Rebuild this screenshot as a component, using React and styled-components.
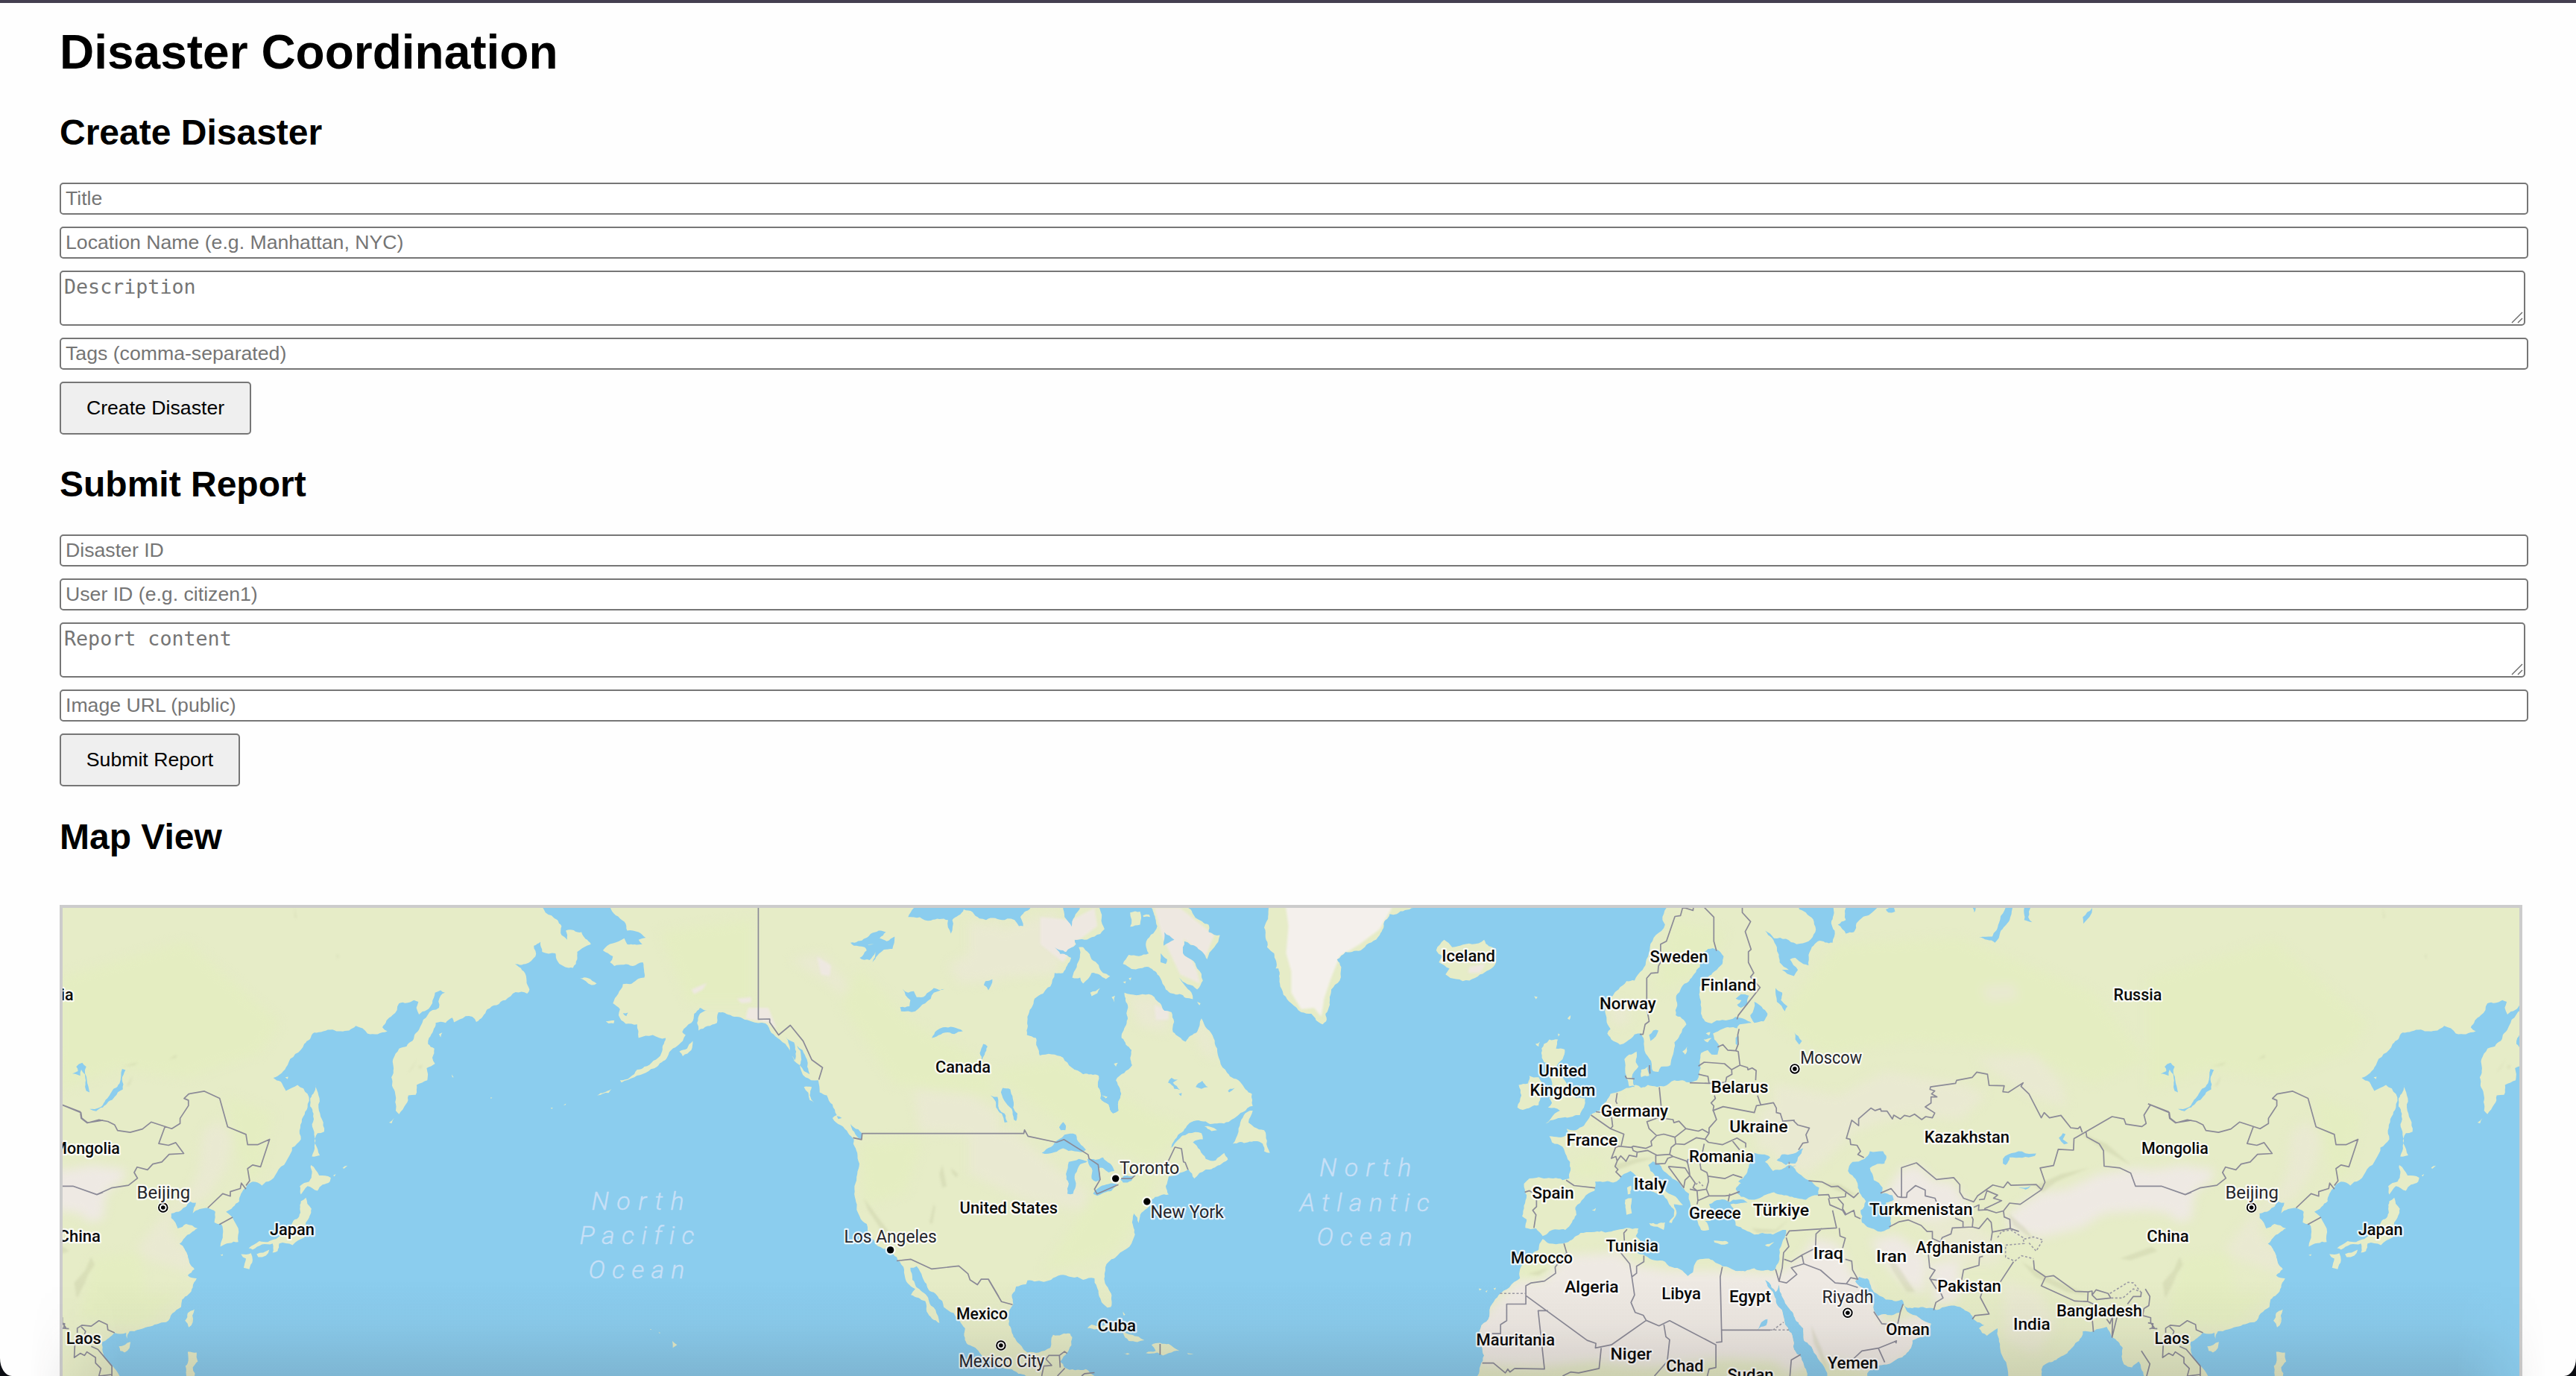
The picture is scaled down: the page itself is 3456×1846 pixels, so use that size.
import React from "react";
import styled, { createGlobalStyle } from "styled-components";

const GlobalStyle = createGlobalStyle`
  html, body { margin: 0; padding: 0; background: #0b0d12; }
  *, *::before, *::after { box-sizing: border-box; }
`;

const Page = styled.main`
  position: relative;
  height: 1846px;
  overflow: hidden;
  padding: 29px 76px 0 80px;
  border-top: 4px solid #443f50;
  border-radius: 0 0 16px 16px / 0 0 24px 24px;
  background: #fefefe;
  color: #000;
  font-family: "Liberation Sans", Arial, Helvetica, sans-serif;
`;

const Title = styled.h1`
  margin: 0 0 43px;
  font-size: 64px;
  line-height: 74px;
  font-weight: 700;
`;

const Section = styled.section`
  margin-bottom: ${(p) => p.$gap || 39}px;
`;

const Heading = styled.h2`
  margin: 0 0 40px;
  font-size: 48px;
  line-height: 55px;
  font-weight: 700;
`;

const Form = styled.form`
  display: flex;
  flex-direction: column;
  align-items: flex-start;
  gap: 16px;
  width: 3296px;
`;

const Input = styled.input`
  width: 3312px;
  height: 43px;
  margin: 0;
  padding: 2px 6px 3px;
  border: 2px solid #767676;
  border-radius: 5px;
  background: #fff;
  font-family: "Liberation Sans", Arial, sans-serif;
  font-size: 26.667px;
  line-height: 30px;
  outline: none;
  &::placeholder { color: #757575; opacity: 1; }
`;

const AreaWrap = styled.div`
  position: relative;
  width: 3308px;
  height: 74px;
`;

const Area = styled.textarea`
  display: block;
  width: 100%;
  height: 100%;
  margin: 0;
  padding: 4px;
  border: 2px solid #767676;
  border-radius: 5px;
  background: #fff;
  font-family: "DejaVu Sans Mono", Menlo, monospace;
  font-size: 26.667px;
  line-height: 31px;
  resize: none;
  overflow: hidden;
  outline: none;
  &::placeholder { color: #757575; opacity: 1; }
`;

const Grip = styled.svg`
  position: absolute;
  right: 3px;
  bottom: 3px;
  width: 16px;
  height: 16px;
`;

const Button = styled.button`
  width: ${(p) => p.$width}px;
  height: 71px;
  margin: 0;
  padding: 0;
  border: 2px solid #767676;
  border-radius: 5px;
  background: #efefef;
  color: #000;
  font-family: "Liberation Sans", Arial, sans-serif;
  font-size: 26.667px;
`;

const MapFrame = styled.div`
  width: 3304px;
  height: 1000px;
  margin-top: 64px;
  border: 4px solid #ccc;
  background: #8bcdee;
  overflow: hidden;
`;

const MapSvg = styled.svg`
  display: block;
  width: 3296px;
  height: 632px;
`;

const Shade = styled.div`
  position: absolute;
  left: 40px;
  right: 40px;
  bottom: 0;
  height: 130px;
  pointer-events: none;
  background: linear-gradient(to bottom, rgba(40, 30, 30, 0), rgba(40, 30, 30, 0.03) 45%, rgba(40, 30, 30, 0.13));
  mask-image: linear-gradient(to right, transparent, #000 120px, #000 calc(100% - 120px), transparent);
`;

/* ---- map geometry: every sheet is 1568 units square with its own origin and x scale ---- */
const WORLD = 2801.8;
const SY = 636 / 1568;
const SHEETS = {
  A: [80 + WORLD, 700 / 1568],
  B: [740, 600 / 1568],
  W: [740 + WORLD, 600 / 1568],
  C: [1300, 600 / 1568],
  D: [1850, 560 / 1568],
  E: [2380, 560 / 1568],
};

function parse(text) {
  let sheet = SHEETS.A;
  const out = [];
  text.trim().split(/\s+/).forEach((t) => {
    if (SHEETS[t]) sheet = SHEETS[t];
    else {
      const [x, y] = t.split(",").map(Number);
      out.push([sheet[0] + x * sheet[1], 1210 + y * SY]);
    }
  });
  return out;
}

function noise(a, b) {
  const v = Math.sin(a * 12.9898 + b * 78.233) * 43758.5453;
  return v - Math.floor(v) - 0.5;
}

function split(a, b, out) {
  const dx = b[0] - a[0];
  const dy = b[1] - a[1];
  const len = Math.hypot(dx, dy);
  const outside = (a[1] < 1216 && b[1] < 1216) || (a[1] > 1848 && b[1] > 1848);
  if (len < 5 || outside) {
    out.push(b);
    return;
  }
  const n = noise(a[0] + b[0], a[1] + b[1]) * 0.24;
  const m = [(a[0] + b[0]) / 2 - dy * n, (a[1] + b[1]) / 2 + dx * n];
  split(a, m, out);
  split(m, b, out);
}

const toPath = (pts, close) =>
  "M" + pts.map((p) => p[0].toFixed(1) + " " + p[1].toFixed(1)).join("L") + (close ? "Z" : "");

function coast(list) {
  return list
    .map((t) => {
      const pts = parse(t);
      const out = [];
      pts.forEach((p, i) => split(p, pts[(i + 1) % pts.length], out));
      return toPath(out, true);
    })
    .join("");
}
const lines = (list) => list.map((t) => toPath(parse(t), false)).join("");
const shapes = (list) => list.map((t) => toPath(parse(t), true)).join("");

const LAND = coast([
  `D 1090,-20 1080,20 1065,60 1075,75 1040,110 1018,150 1005,190 990,225 960,260 930,262 900,290 855,330 855,390 870,420 858,435 880,460 905,472 930,462 960,438 985,435 995,470 1010,510 1025,545 1030,560 1050,562 1060,545 1095,540 1105,505 1110,465 1130,440 1155,405 1145,390 1115,375 1117,310 1135,285 1165,262 1205,215 1215,175 1235,155 1270,158 1295,180 1290,205 1260,230 1235,250 1205,280 1210,330 1210,370 1225,395 1250,402 1290,390 1340,380 1375,388 1400,400 1355,405 1345,418 1290,420 1255,435 1260,455 1278,475 1272,505 1250,505 1235,490 1210,500 1205,530 1203,570 1195,590 1170,597 1140,590 1110,590 1070,610 1045,612 1010,605 985,615 965,605 940,610 932,585 925,560 922,520 940,505 968,495 965,530 975,545 960,560 950,580 955,600 960,612 930,615 910,625 870,635 855,660 830,690 795,705 770,740 740,755 705,750 710,770 640,775 650,795 690,810 705,840 718,860 715,915 690,920 620,915 565,915 545,932 555,970 538,1040 555,1050 550,1078 590,1080 615,1105 640,1090 700,1085 725,1060 742,1035 738,1010 770,980 810,955 812,925 850,925 880,928 920,900 945,890 965,905 990,935 1020,955 1070,970 1090,1000 1110,1020 1108,1040 1090,1060 1100,1062 1118,1030 1108,1000 1130,1003 1142,1003 1115,975 1070,945 1045,915 1020,890 1012,870 1030,858 1050,865 1065,885 1090,905 1140,945 1165,965 1170,1000 1180,1020 1195,1050 1210,1085 1240,1085 1225,1055 1260,1050 1250,1020 1240,1000 1260,990 1300,985 1325,995 1320,1000 1335,1030 1340,1070 1375,1085 1410,1100 1440,1095 1480,1100 1530,1085 1545,1085 E 45,1085 42,1105 30,1130 20,1170 5,1215 D 1480,1220 1410,1212 1375,1222 1320,1212 1290,1205 1240,1180 1195,1185 1180,1225 1160,1238 1130,1215 1090,1205 1075,1190 1000,1170 970,1160 990,1130 965,1105 975,1080 930,1078 880,1088 820,1090 740,1105 690,1130 640,1130 615,1115 600,1150 555,1180 530,1215 530,1245 490,1275 450,1300 425,1330 415,1370 385,1400 378,1440 385,1470 395,1500 370,1568 370,1620 E 150,1620 125,1568 115,1540 75,1480 70,1440 40,1390 30,1350 0,1300 D 1480,1290 1450,1250 1465,1258 1490,1290 1502,1265 E 22,1288 40,1320 75,1370 110,1410 112,1450 150,1490 165,1510 195,1550 200,1620 340,1620 350,1560 415,1530 465,1510 515,1475 520,1450 560,1440 590,1395 545,1375 500,1355 485,1330 475,1358 450,1365 390,1370 375,1350 365,1315 330,1275 305,1255 320,1240 350,1245 375,1290 420,1315 480,1315 495,1340 560,1340 610,1350 700,1340 745,1370 790,1400 770,1410 800,1435 840,1410 850,1480 880,1568 890,1620 1000,1620 1005,1560 1010,1535 1060,1515 1155,1440 1160,1420 1200,1420 1250,1405 1270,1440 1310,1475 1315,1530 1345,1540 1370,1520 1390,1568 1400,1620 A 180,1620 180,1568 155,1530 130,1490 128,1455 165,1425 200,1425 203,1445 210,1420 265,1405 320,1390 365,1340 368,1315 400,1275 412,1245 385,1235 405,1215 385,1170 360,1130 395,1095 415,1080 380,1065 355,1080 335,1045 335,1030 365,1020 390,990 410,995 400,1030 445,1012 468,1025 465,1060 485,1065 490,1100 483,1140 537,1125 537,1080 520,1045 500,1025 540,990 545,965 580,925 608,938 635,920 685,850 725,785 732,710 745,680 745,635 715,605 680,625 665,595 642,582 685,540 735,470 765,432 820,422 870,425 890,410 925,435 985,428 970,415 1000,375 1020,335 1065,325 1078,330 1072,350 1080,372 1120,335 1128,300 1145,292 1158,300 1145,310 1140,350 1085,410 1060,460 1020,485 1002,520 997,580 1010,690 1020,702 1040,670 1048,640 1070,638 1073,605 1105,590 1103,550 1128,535 1120,515 1126,485 1107,470 1110,450 1130,400 1160,400 1180,383 1185,398 1220,378 1240,380 1252,397 1285,355 1340,325 1370,298 1405,303 1412,290 1395,230 1375,210 1355,200 1400,205 1430,180 1425,145 1445,132 1450,165 1490,170 W 20,195 60,218 75,218 90,190 90,165 138,140 105,100 50,95 55,125 35,110 35,80 0,45 A 1460,35 1450,15 1450,-20`,
  `D 640,455 672,455 665,485 698,488 690,520 665,550 690,580 705,600 720,630 740,650 775,650 770,680 755,705 700,712 665,718 625,733 660,700 680,690 635,680 650,665 640,650 670,640 650,610 640,570 640,540 620,530 610,500 620,470`,
  `D 600,580 565,575 560,600 525,605 535,640 520,680 540,688 600,672 610,640 615,600`,
  `D 215,160 245,125 275,150 305,145 350,140 395,125 440,160 440,200 380,240 340,260 290,255 250,240 265,220 225,200 240,180`,
  `D 985,555 1010,545 1015,575 985,580`, `D 1140,495 1158,478 1150,505`, `D 1220,455 1250,450 1235,465`,
  `D 1228,435 1245,430 1240,442`, `D 925,985 950,980 950,1030 930,1035`, `D 932,945 947,938 945,965 935,968`,
  `D 1015,1062 1075,1060 1070,1085 1020,1070`, `D 1258,1120 1312,1126 1312,1130 1260,1126`,
  `D 1450,1135 1485,1125 1465,1140`, `D 800,1020 815,1012 812,1022`, `D 583,312 596,314 590,322`,
  `D 708,385 720,375 716,390`, `D 588,470 605,462 600,478`, `D 672,435 680,438 674,445`,
  `D 375,1278 386,1280 378,1286`, `D 430,1278 440,1276 436,1284`, `D 400,1288 408,1284 404,1292`,
  `A 770,603 778,640 778,680 795,760 775,765 768,800 782,838 758,842 765,770 763,700 753,650`,
  `A 755,870 780,905 815,912 812,925 775,955 745,940 725,968 722,940 750,925`,
  `A 740,978 757,1015 740,1060 735,1110 700,1135 660,1130 655,1155 640,1160 640,1130 580,1150 568,1145 600,1122 650,1115 690,1075 720,1040 725,990`,
  `A 545,1165 575,1162 580,1185 570,1215 553,1210 560,1180`, `A 592,1165 630,1150 620,1170 597,1175`,
  `A 405,1347 400,1390 388,1407 377,1385 385,1360`, `A 178,1470 213,1455 210,1475 195,1490 182,1485`,
  `A 385,1488 412,1490 415,1520 400,1540 400,1620 375,1620 378,1535 385,1525`,
  `A 1140,437 1150,432 1145,448`, `A 990,730 1005,715 998,732`, `A 678,580 687,578 685,586`,
  `A 850,880 865,872 855,882`, `A 822,905 830,900 826,908`, `A 483,1168 491,1165 489,1171`,
  `A 1178,570 1184,580 1180,580`, `A 1295,646 1300,648 1296,651`, `A 1475,682 1482,680 1480,685`, `A 1514,672 1522,667 1520,672`,
  `B 160,-20 205,15 255,65 265,95 305,100 330,118 305,125 318,140 265,140 255,120 180,160 215,180 205,200 220,212 285,212 320,200 325,250 275,272 250,272 215,335 240,355 235,375 260,403 300,405 305,450 355,440 400,450 385,500 325,545 300,555 275,580 240,590 245,597 290,580 330,565 370,545 410,505 460,460 470,440 458,430 490,400 500,370 520,350 545,358 520,370 510,400 515,425 580,400 585,365 640,380 700,395 750,402 800,455 820,470 850,525 870,540 890,580 910,590 935,590 940,630 965,640 985,670 1000,705 985,715 1040,765 1060,785 1058,800 1072,830 1072,900 1062,940 1070,1010 1080,1040 1105,1065 1120,1105 1140,1135 1190,1150 1210,1175 1240,1245 1275,1280 1260,1300 1310,1320 1315,1355 1360,1393 1355,1370 1330,1335 1300,1290 1265,1250 1258,1210 1280,1205 1300,1240 1370,1320 1375,1340 1410,1360 1450,1410 1455,1460 1500,1490 C 60,1515 100,1535 150,1545 200,1568 220,1620 460,1620 440,1568 410,1545 335,1540 320,1520 345,1490 362,1440 355,1428 295,1432 285,1475 245,1490 205,1490 165,1450 140,1400 142,1350 155,1330 150,1300 165,1272 200,1265 205,1252 270,1255 340,1235 380,1240 400,1250 440,1245 455,1300 485,1342 497,1340 495,1290 475,1230 490,1190 530,1160 570,1130 582,1100 575,1070 578,1030 595,1062 600,1035 640,985 700,968 690,940 700,908 770,885 790,915 830,885 880,870 908,852 895,830 865,855 830,850 810,820 785,795 820,785 815,765 770,765 730,790 695,822 740,765 780,728 910,728 960,695 995,675 992,635 955,600 905,565 880,525 870,485 835,420 815,385 800,430 760,462 715,430 710,365 685,360 650,315 630,305 545,300 553,400 535,450 570,490 572,540 515,590 530,650 525,690 505,700 460,650 455,575 400,570 360,548 330,515 248,508 235,450 203,440 205,380 230,320 285,280 300,235 330,235 358,185 300,155 340,165 375,140 370,125 405,125 440,115 475,90 455,15 455,-20`,
  `C 640,-20 645,30 660,80 620,140 630,170 560,175 540,205 570,222 630,215 670,250 690,290 785,322 780,300 735,250 800,290 820,260 800,220 750,170 755,130 800,150 835,190 860,150 880,110 840,100 840,75 760,15 750,-20`,
  `C 385,150 400,150 430,190 470,235 495,245 480,255 430,235 400,270 390,250 362,250 378,215`,
  `C 565,35 600,32 600,75 565,82`, `C 610,45 632,42 635,50 612,50`, `C 425,300 460,285 450,302 430,312`, `C 500,315 512,310 510,332`,
  `C 540,265 550,262 548,270`, `C 560,252 570,250 565,260`, `C 800,330 812,335 808,342`, `C 508,535 522,532 515,545`, `C 465,640 485,645 480,650`,
  `C 985,690 995,690 980,730 1000,745 1035,755 1045,790 1055,830 1035,825 1030,800 925,800 945,760 955,720 975,695`,
  `C 825,742 870,755 850,758`, `B 885,612 912,612 905,640 920,663 905,655`, `B 448,495 475,485 495,460 490,490 460,510`,
  `B 100,252 128,252 158,270 140,275 120,262`, `B 190,395 220,392 218,402 200,402`, `B 423,1452 440,1465 425,1475`,
  `B 375,1423 382,1425 378,1427`, `B 345,1413 350,1413 348,1416`,
  `B 160,640 185,630 210,618 200,632 180,634`,
  `C 415,1410 430,1398 440,1400 500,1400 560,1430 615,1450 590,1456 560,1452 540,1425 480,1410`,
  `C 640,1465 700,1462 738,1485 700,1492 680,1500 660,1490 620,1492 655,1485`, `C 540,1492 573,1495 555,1498`, `C 765,1492 788,1495 768,1496`,
  `C 540,1355 548,1365 543,1368`,
  `C 1045,-20 1050,25 1035,85 1045,150 1070,170 1075,220 1085,220 1090,270 1130,335 1165,365 1200,370 1240,405 1252,395 1250,370 1265,340 1270,290 1300,260 1305,215 1290,190 1320,165 1380,155 1440,110 1460,60 1475,40 1500,40 1560,20 1568,-20`,
]);

const WATER = coast([
  `D 1360,930 1350,925 1380,900 1390,870 1410,830 1440,835 1470,845 1450,860 1480,890 1540,870 1568,873 E 60,872 130,920 170,945 165,970 120,985 60,975 0,960 D 1500,960 1440,975 1400,985 1360,975 1340,950`,
  `E 10,855 30,835 110,815 90,845 80,865 45,870`,
  `D 1312,1000 1330,985 1370,985 1385,995 1350,998`,
  `E 340,850 360,825 410,825 422,840 415,865 380,870 360,880 375,920 408,945 405,965 445,970 450,985 420,995 437,1030 435,1080 390,1090 330,1060 325,1020 345,990 320,960 295,905 278,890 295,860`,
  `E 860,850 880,835 985,832 980,840 885,845 870,870 860,865`, `E 918,944 965,938 945,952`,
  `E 1070,780 1085,765 1095,768 1085,785 1105,798 1090,802`,
  `A 90,685 120,680 150,640 180,600 188,552 198,556 190,620 165,645 130,680 110,692`,
  `A 38,568 55,560 50,545 68,532 80,545 82,590 90,630 80,625 76,570 65,555 62,575`,
  `D 1395,375 1410,330 1460,370 1445,395 1410,400`, `D 1490,285 1515,300 1510,325 1535,345 1525,362 1495,330`,
  `D 1015,440 1030,425 1050,425 1040,445 1020,460`, `D 1340,320 1360,305 1390,310 1385,340 1360,350 1345,340 1362,325`,
  `D 1340,450 1350,440 1348,475 1340,470`, `E 75,430 105,460 95,472 80,455`,
  `E 75,-20 95,25 150,65 155,100 130,130 85,140 0,120 D 1450,95 1495,150 1505,200 1540,225 E 30,225 50,238 75,245 90,225 60,190 80,185 110,205 130,210 130,175 165,130 220,135 228,95 215,70 222,15 225,-20`,
  `E 280,-20 270,60 240,75 270,105 300,100 310,70 400,15 410,-20`,
  `E 865,-20 845,70 820,115 770,118 830,135 850,100 885,60 885,-20`, `E 945,-20 940,60 970,67 955,50 958,-20`,
  `E 1160,50 1195,20 1185,50 1162,72`, `E 420,25 450,15 455,32 430,35`, `E 740,5 758,20 752,35`,
  `B 1270,20 1250,50 1330,62 1390,60 1400,105 1405,60 1445,25 1500,55 C 60,60 125,60 135,55 160,60 175,80 190,80 180,50 200,30 220,15 220,-20 0,-20 B 1280,0`,
  `C 340,-20 335,50 360,82 370,50 390,15 390,-20`, `C 300,150 330,160 355,180 320,172`,
  `C 685,100 720,125 700,135 682,145`, `C 672,170 695,190 690,205 672,200`,
  `C 255,830 315,785 335,770 375,770 410,820 395,828 370,825 330,815 300,828`,
  `C 345,965 340,900 350,860 385,850 415,858 390,868 372,900 375,930 365,965`,
  `C 415,850 470,845 495,865 510,890 490,895 470,880 455,880 460,920 445,925 430,915 430,880`,
  `C 435,965 460,942 520,932 500,955 450,972`, `C 530,918 545,905 580,905 570,922 540,928`,
  `C 112,630 118,615 145,620 155,680 170,700 165,725 157,720 150,685 130,665`,
  `C 75,640 100,645 105,685 125,700 135,728 125,730 115,700 95,680 90,655`,
  `C 316,745 330,728 340,740 338,755 322,755`, `C 52,275 58,262 82,256 78,275 68,292`, `C 38,500 50,470 65,478 55,505 45,525`,
  `C 698,598 710,582 732,588 715,598 740,622 720,618 710,605`, `C 795,612 818,592 838,612 815,618`, `C 908,625 915,618 932,615 912,630`, `C 735,635 746,632 744,642`,
  `B 1048,135 1100,120 1155,95 1172,100 1150,120 1175,130 1203,115 1195,155 1165,158 1125,200 1135,165 1115,192 1080,185 1105,160 1095,148 1130,140 1060,145`,
  `B 1230,288 1250,300 1270,295 1280,315 1310,310 1340,285 1378,288 1340,300 1310,335 1275,362 1225,362 1222,348 1255,345 1258,325`,
  `B 1333,450 1350,425 1372,415 1442,428 1380,432 1350,445`,
  `B 820,445 850,465 852,525 832,500`, `B 860,475 880,490 895,520 905,570 885,560 870,540 875,515`,
  `B 1048,735 1075,752 1088,765 1086,785 1075,780 1055,755`, `B 1000,708 1018,715 1005,718`, `B 250,368 268,366 262,378`,
  `D 1422,1415 1445,1385 1460,1380 1455,1400 1435,1405`,
]);

const DRY = shapes([
  `D 700,1170 900,1160 960,1200 1090,1220 1250,1220 1500,1230 E 100,1180 150,1110 240,1130 300,1240 350,1260 420,1400 600,1350 600,1440 420,1560 180,1510 60,1560 0,1520 D 1300,1510 1000,1540 800,1520 600,1540 380,1530 360,1400 520,1250 620,1250`,
  `E 480,880 540,870 600,920 680,930 700,970 740,1000 680,1040 560,1060 470,1020 420,960`,
  `E 880,1030 1000,960 1100,950 1220,900 1360,880 1568,900 1568,1040 1400,1020 1240,1030 1150,1080 1000,1110 880,1080`,
  `A 0,890 100,870 200,885 190,920 140,960 130,1050 90,1060 60,1030 0,1020`,
  `E 360,1120 460,1100 540,1150 580,1180 560,1300 500,1270 420,1200`, `E 590,1190 700,1190 690,1320 600,1330`,
]);

const TAN = shapes([
  `A 430,760 480,720 520,780 500,880 440,980 360,1010 330,1080 400,1170 400,1230 260,1180 230,1150 300,1050 400,940 420,880`,
  `E 0,600 240,640 420,560 700,600 800,640 700,720 500,700 300,760 200,850 120,900 0,850`,
  `E 760,520 980,500 1080,600 1100,680 960,640`, `E 580,1060 740,1060 860,1140 840,1200 700,1200 600,1160`,
  `E 860,1250 1000,1290 1060,1400 980,1500 870,1450`, `E 780,280 900,270 920,320 800,330`,
  `C 0,750 160,760 330,900 420,960 400,1020 200,990 0,900`, `B 1270,620 1480,640 1568,700 1568,780 1290,760`, `B 1390,210 1500,150 1568,40 1568,260 1430,270`,
  `C 0,60 120,90 300,30 350,150 300,240 100,250 0,180`, `B 840,190 950,170 1040,280 1020,310 960,260`, `C 560,310 680,320 700,430 600,410`, `C 790,400 830,410 870,520 820,500`,
  `D 1430,690 1568,640 1568,830 1420,820`, `D 870,340 930,330 940,400 880,410`, `D 850,640 900,640 880,700 830,720`, `C 160,1290 220,1300 220,1350 150,1380`,
]);

const GREEN = shapes([
  `A 0,250 380,130 660,400 600,500 380,580 180,550 0,620`, `A 100,1180 240,1160 260,1300 360,1290 250,1400 60,1380`,
  `A 500,640 640,700 600,900 560,920 520,760`, `B 380,100 700,60 700,330 480,330`, `B 1080,220 1260,400 1500,520 1560,640 1200,600 1020,340`,
  `C 60,560 320,520 640,700 780,740 640,860 400,780 160,620`, `C 480,920 660,900 600,1040 500,1160 260,1220 380,1050`, `B 1080,800 1300,780 1240,960 1100,1000`,
  `E 240,140 700,120 1200,300 1400,520 1200,600 900,480 500,460 200,500 0,400`, `D 1100,60 1300,100 1240,220 1040,300`, `D 820,840 720,860 740,910 860,900`,
  `D 520,1220 640,1200 600,1250 530,1270`,
]);

const PEAKS = shapes([
  `B 690,350 760,350 790,420 760,400 680,385`, `B 490,290 545,268 530,290 500,305`, `B 650,320 700,315 700,332 665,335`, `B 930,180 980,210 975,245 945,240`,
  `C 250,50 360,60 440,20 450,80 380,130 330,200 250,140`, `C 650,20 740,20 860,110 830,180 750,120 800,230 810,270 740,240 680,120`,
  `D 340,215 400,205 380,235 335,235`, `C 650,340 700,360 700,390 655,390`,
]);

const ICE = shapes([
  `C 1110,10 1120,80 1112,170 1130,230 1130,300 1165,355 1210,350 1235,380 1245,320 1270,250 1300,180 1370,140 1440,90 1480,25 1490,-20 1110,-20`,
]);

const RIDGES = shapes([
  `E 980,940 1080,900 1180,880 1060,925 1010,960`, `E 1140,760 1250,800 1340,870 1240,820`, `E 930,1190 1040,1245 1180,1300 1100,1290 980,1240`,
  `E 1460,1260 1530,1190 1500,1260 1470,1310`, `E 1300,1180 1420,1140 1440,1155 1340,1185`, `A 60,1260 95,1175 105,1200 75,1250 60,1280`,
  `E 420,1150 470,1210 530,1290 500,1290 440,1210`, `E 180,930 250,935 320,975 240,955`, `E 880,1030 940,1075 980,1120 900,1070`,
  `E 140,1400 180,1480 200,1550 150,1460`, `B 1095,980 1150,1050 1190,1100 1160,1090 1110,1020`, `B 1370,870 1385,940 1370,945 1360,900`,
  `B 1325,1060 1340,1000 1345,1010 1335,1065`, `D 880,870 960,850 1040,845 960,865 900,885`, `D 560,1230 640,1210 600,1235`, `D 1400,1080 1490,1085 1540,1050 1490,1092 1420,1095`,
  `A 1045,570 1075,520 1060,550`, `A 1078,545 1090,540 1085,552`, `A 330,520 352,505 350,515`, `A 190,545 235,530 225,540`, `A 200,610 220,575 210,605`,
  `A 705,20 712,50 708,55`, `A 832,175 838,175 836,190`, `B 1400,880 1425,900 1420,912 1405,898`, `A 395,1390 405,1360 400,1390`,
]);

const BORDERS = lines([
  `B 725,-20 725,388 765,387 765,398 796,440 837,408 882,460 912,522 950,548 937,588`,
  `B 1057,780 1087,786 1089,766 1568,766`,
  `C 15,766 192,766 195,754 207,775 307,795 333,786 418,836 421,849 453,869 460,918 440,950 449,966 524,935`,
  `C 534,915 570,915 583,904`, `C 695,865 722,811 745,816 752,860 758,862 768,886`,
  `B 1210,1187 1260,1182 1333,1214 1428,1204 1460,1230 1467,1250 1493,1266 1506,1248 1532,1248 1568,1306`,
  `C 68,1248 114,1322 153,1332`, `C 670,1462 670,1498`,
  `C 255,1568 262,1535 290,1533 270,1512 280,1500 317,1500 335,1487 344,1493`, `C 317,1500 320,1540`, `C 310,1568 336,1542`, `C 395,1568 405,1560 440,1557`,
  `D 1142,15 1133,45 1112,48 1080,130 1058,140 1058,200 1050,212 1048,234 1022,236 1006,252 1006,350 1015,395 1000,405 992,438 980,438`,
  `D 1142,18 1180,28 1182,15`, `D 1222,18 1258,50 1258,130 1268,162`, `D 1365,15 1365,35 1396,65 1376,98 1398,157 1388,165 1388,200 1408,235 1396,248 1432,283 1350,375 1345,388`,
  `D 1353,420 1348,440 1350,470 1340,492 1310,490 1292,472 1272,480`, `D 1340,492 1350,495 1356,540 1325,555 1298,535 1222,530 1200,543`,
  `D 1356,540 1385,548 1386,555 1402,549 1417,558 1415,590`, `D 1325,555 1326,570 1306,580 1302,597 1240,600`, `D 1200,570 1236,577 1240,600 1168,598`,
  `D 1260,640 1264,650 1248,665 1258,675 1255,690 1293,677 1410,697 1418,674 1482,664 1493,682 1493,697 1508,700 1517,725 1560,722 E 75,725 90,738 133,748 120,770 128,795 108,798 92,820`,
  `D 1422,640 1434,670`, `D 1256,690 1268,720 1240,748 1240,765 1225,785 1238,795 1290,803 1345,781 1378,798 1378,812`, `D 1325,787 1355,820`,
  `D 1053,613 1060,675`, `D 925,575 930,583 960,585`, `D 1016,540 1018,568`, `D 895,632 890,660 895,668`, `D 797,705 870,750 878,742 874,712`, `D 815,694 840,697`, `D 870,750 920,768 910,806`,
  `D 1060,710 1007,727 1015,750 1043,773 1070,768 1112,778 1153,750 1127,725 1108,730 1105,720 1060,715`, `D 1153,750 1200,758 1215,752 1240,765`,
  `D 1112,778 1115,800 1148,802 1192,780 1225,785`, `D 1043,773 1022,792 1025,806 1003,815 955,808 948,812 900,808 889,812 873,848 890,842 895,857 908,840 920,850 928,858 940,838 968,843 970,828 955,822 950,808`,
  `D 968,828 1010,822 1045,838 1092,835 1098,812 1115,800`, `D 1040,838 1040,867 1075,865 1085,848 1105,842 1092,835`, `D 1105,842 1155,857 1160,865 1160,852 1210,850 1222,800`,
  `D 895,857 887,875 898,885 890,893 910,910`, `D 703,920 733,938 812,946`, `D 548,960 565,955 575,960`, `D 592,985 592,1008 578,1020 590,1035 582,1078`,
  `D 1087,875 1150,880 1168,905 1150,920 1145,945 1087,875`, `D 1160,865 1165,885 1168,905 1188,930 1180,945 1195,955 1168,950`, `D 1205,860 1210,885 1232,895 1236,907 1300,915 1330,902 1365,912`,
  `D 1236,907 1238,925 1230,950 1240,972 1300,972 1320,970 1355,958`, `D 1195,955 1230,950`, `D 1240,972 1198,988 1195,955`, `D 1198,988 1195,1000`, `D 1318,965 1312,990`,
  `D 932,1083 920,1095 922,1120`, `D 908,1160 942,1197 950,1240 968,1228 968,1205 995,1190 995,1170`, `D 950,1240 960,1300 947,1325 963,1358 993,1367 1004,1384 873,1465 813,1475 815,1460 782,1450 552,1302`,
  `D 695,1130 705,1160 662,1208 664,1228 622,1254 572,1260 552,1270 552,1330 480,1330 480,1385 457,1398 457,1428 425,1428`,
  `D 635,1352 598,1352 622,1545 510,1543 492,1555 484,1545 475,1558 430,1525 388,1525`, `D 835,1475 827,1543 750,1558 720,1555 690,1568`,
  `D 1004,1384 1052,1402 1092,1385 1266,1465 1266,1540 1240,1545 1230,1580`, `D 1070,1395 1078,1438 1092,1448 1083,1520 1035,1568`, `D 1290,1207 1282,1240 1288,1455 1266,1457`, `D 1288,1416 1470,1416`,
  `D 1490,1215 1503,1255 1515,1210 1520,1160 1540,1140 1530,1110`, `E 45,1105 58,1088 235,1078 220,1020`, `E 180,1080 158,1098 156,1145 105,1168 65,1190 38,1182`, `E 105,1168 112,1197 65,1210 86,1232 47,1260 20,1255`,
  `E 112,1197 175,1218 230,1260 272,1263 288,1243 315,1248 295,1217 292,1188 268,1182`, `E 272,1263 315,1275`, `E 245,1078 248,1105 268,1112 258,1145`, `E 375,1355 405,1395 430,1397`,
  `E 485,1330 475,1355 465,1395`, `E 458,1460 460,1452 392,1476 330,1485 300,1510`, `E 392,1476 416,1523`, `E 130,922 180,926 215,942 240,940 300,978 318,962`, `E 165,970 205,968 210,980 268,975 270,962`,
  `E 205,980 210,1002 258,1020 268,1035 300,1020 305,1040 325,1048`, `E 240,980 260,1000 258,1015 272,1035`, `E 338,846 315,835 325,825 312,805 288,802 286,785 272,782 292,722 318,740 318,717 364,682 380,690 400,684 403,692 425,692 445,718 450,705 475,718 490,706 510,710 528,702 555,720 570,710 595,714 604,698 568,678 590,665 590,645 612,645 592,635 604,625 586,620 588,612 682,600 686,590 745,580 762,563 802,570 808,607 865,608 860,628 880,630 936,598 928,610 958,635 1004,714 1015,697 1035,714 1078,706 1115,747 1142,750 1150,743 1158,762`,
  `E 1172,760 1270,710 1315,718 1322,735 1382,743 1398,733 1390,705 1414,671 1485,697 1488,715 1510,730 1568,722`,
  `A 0,668 62,694 65,716 83,731 118,721 145,726 165,737 174,756 212,762 249,751 275,728 337,750 362,733 362,716 387,674 387,656 374,650 388,635 435,626 481,650 505,744 560,769 565,803 595,803 631,785 604,876 580,870 565,882 571,922 560,938`,
  `A 317,742 298,799 327,805 349,796 373,832 329,835 307,860 280,867 264,886 233,877 224,895 234,914 207,937 156,946 112,968 40,940 0,940`,
  `E 1568,960 1545,968 1455,940 1358,940 1340,897 1300,880 1240,874 1238,823 1222,800 1175,777 1172,760 1127,783 1125,821 1068,818 1050,872 1000,880 1018,927 1005,952`,
  `E 1005,952 985,935 890,937 878,926 862,945 822,936 765,972 750,992 712,980 698,960 698,935 675,912 610,918 535,863 479,879 479,977 465,975 440,948 400,963`,
  `E 479,977 498,977 500,962 532,938 568,953 568,972 605,980 610,992`, `E 1005,952 925,1000 885,996 862,1022 835,1028 800,1018 768,1020 770,1002 750,1010`, `E 770,985 790,983 800,955 840,970 825,980 855,988 820,1003 790,1015`,
  `E 862,1022 865,1042 886,1050 888,1080 820,1092 816,1060 802,1046 770,1080 745,1075 670,1078 665,1098 632,1110 625,1125 595,1113 595,1090 575,1090 553,1070 505,1052 470,1058 433,1075`, `E 745,1075 748,1050 740,1035`, `E 710,1075 710,1058 680,1045`,
  `E 820,1092 815,1120`, `E 580,1165 585,1210 605,1218 585,1245 610,1280`, `E 625,1290 635,1310 608,1325 600,1350`, `E 585,1248 620,1252`, `E 705,1250 712,1217 770,1202 772,1175 785,1172`,
  `E 900,1190 850,1257`, `E 782,1290 775,1308 808,1363 755,1368 745,1380`, `E 888,1080 920,1090`, `E 975,1185 978,1215 1020,1240 1004,1270 1130,1320 1178,1322 1180,1290 1132,1288 1050,1236 1020,1240`, `E 1180,1290 1195,1287 1195,1300 1210,1283 1255,1295 1265,1310 1212,1315 1195,1300`,
  `E 1180,1322 1200,1330`, `E 1195,1375 1200,1422`, `E 1380,1290 1378,1305 1350,1305 1328,1330`, `E 1395,1280 1412,1305 1408,1335 1390,1345 1385,1368 1415,1375 1415,1392 1428,1408 1410,1412`, `E 1250,1380 1262,1395 1272,1370 1270,1440 1288,1375`,
  `A 0,1392 15,1395 12,1410 28,1412`, `A 165,1425 145,1415 143,1398 118,1385 95,1403 67,1400 53,1410 53,1425`, `A 65,1405 78,1420 75,1430`, `A 95,1470 115,1480 157,1535 157,1568`, `A 46,1460 44,1507 62,1493 75,1500 82,1488 108,1507 108,1525 124,1543 118,1568 157,1563`,
  `A 445,1012 490,965 513,973 513,958 543,948 546,930 560,950`, `A 480,1067 520,1043`, `E 60,1568 65,1515 100,1497`, `E 1380,1485 1412,1528 1400,1568`,
]);

const DISPUTED = lines([
  `D 455,1295 552,1295`, `D 1470,1416 1545,1416`, `D 1480,1416 1520,1390`, `E 57,860 57,885`,
  `E 840,1110 855,1090 890,1085 935,1110 940,1130 870,1135 870,1175 905,1188 930,1170 975,1180`, `E 940,1115 975,1108 1010,1118 985,1155 955,1125`, `E 1262,1295 1330,1258 1350,1260 1378,1290 1350,1280 1310,1310 1265,1310`, `D 1190,935 1202,926 1218,940`,
]);

const COUNTRIES = [
  ["Russia", 2837.1, 2899.3, 1341.8], ["Mongolia", 2874.6, 2961.7, 1548.3], ["China", 2881.8, 2935.7, 1665.9],
  ["Japan", 3165.2, 3222.7, 1657], ["Laos", 2892.1, 2936.4, 1803.4], ["Canada", 1256.6, 1328.1, 1439.2],
  ["United States", 1289.1, 1417.9, 1627.8], ["Mexico", 1284.5, 1350.9, 1769.7], ["Cuba", 1474.1, 1523.1, 1786.4],
  ["Iceland", 1935.7, 2005, 1289.9], ["Sweden", 2215, 2290.4, 1290.7], ["Finland", 2283.2, 2355.4, 1329.2],
  ["Norway", 2147.5, 2220.7, 1354.4], ["United", 2065.7, 2127.9, 1444], ["Kingdom", 2053.9, 2139.3, 1469.6],
  ["Belarus", 2297.1, 2371.4, 1465.9], ["Germany", 2149.3, 2237.1, 1497.6], ["Ukraine", 2321.8, 2397.5, 1519.1],
  ["France", 2102.9, 2169.3, 1536.9], ["Romania", 2267.5, 2352.1, 1558.8], ["Italy", 2193.2, 2235, 1595.7],
  ["Spain", 2057.1, 2110.7, 1608.3], ["Greece", 2267.5, 2334.6, 1635.1], ["Türkiye", 2353.2, 2426.1, 1631],
  ["Tunisia", 2156, 2223.9, 1678.9], ["Morocco", 2028.6, 2108.9, 1695.1], ["Algeria", 2100.7, 2170.7, 1733.6],
  ["Libya", 2230.7, 2281, 1743], ["Egypt", 2321.4, 2375, 1747.4], ["Mauritania", 1982.1, 2085, 1804.6],
  ["Niger", 2162.1, 2215, 1823.7], ["Chad", 2236.8, 2284.6, 1839.9], ["Sudan", 2318.9, 2378.6, 1851.7],
  ["Kazakhstan", 2583.2, 2695, 1532.5], ["Turkmenistan", 2509.6, 2645.4, 1629.8], ["Iraq", 2434.3, 2472.1, 1689],
  ["Iran", 2518.6, 2557.1, 1692.7], ["Afghanistan", 2571.8, 2686.4, 1680.9], ["Pakistan", 2600.7, 2683.9, 1732.8],
  ["Oman", 2531.8, 2587.9, 1791.2], ["India", 2702.5, 2749.6, 1784], ["Bangladesh", 2760.4, 2872.9, 1766.1],
  ["Yemen", 2453.2, 2518.9, 1835.9],
];

const CITIES = [
  ["Beijing", 2986.9, 3056, 1607.5, 3020.6, 1620, true], ["Los Angeles", 1134.1, 1255.8, 1667.1, 1194.6, 1676.9, false],
  ["Mexico City", 1287.9, 1400.3, 1833.8, 1342.9, 1805, true], ["Toronto", 1503.6, 1581.3, 1575, 1496.7, 1581.1, false],
  ["New York", 1544.9, 1640.9, 1634.3, 1538.8, 1612, false], ["Moscow", 2416.8, 2497.1, 1427.4, 2407.9, 1433.9, true],
  ["Riyadh", 2446.1, 2512.5, 1748.2, 2478.9, 1761.2, true],
];

/* name, left edge, baseline, tracking */
const OCEANS = [
  ["North", 793.5, 1622.5, 10.4], ["Pacific", 777.5, 1669.1, 9.4], ["Ocean", 789.5, 1715, 9.2],
  ["North", 1770, 1577.5, 10.2], ["Atlantic", 1743.5, 1624.5, 9.3], ["Ocean", 1766.5, 1671.2, 9],
];

const Country = styled.text`
  font-family: Roboto, "Open Sans", sans-serif;
  font-size: 22px;
  font-weight: 500;
  fill: #0a0a0a;
  stroke: rgba(255, 255, 255, 0.8);
  stroke-width: 4.6px;
  stroke-linejoin: round;
  paint-order: stroke;
`;

const City = styled(Country)`
  font-size: 24.5px;
  font-weight: 400;
  fill: #26262c;
`;

const Ocean = styled.text`
  font-family: Roboto, "Open Sans", sans-serif;
  font-size: 34px;
  font-weight: 300;
  font-style: italic;
  fill: #c8e0f7;
  stroke: #c8e0f7;
  stroke-width: 0.4px;
`;

function Terrain() {
  return (
    <g id="terrain">
      <path d={LAND} fill="#e6ecc7" />
      <g clipPath="url(#land)">
        <g filter="url(#soft)">
          <path d={GREEN} fill="#e4edc1" />
          <path d={TAN} fill="#e9e9d1" />
          <path d={DRY} fill="#eee9e3" />
        </g>
        <g filter="url(#faint)">
          <path d={PEAKS} fill="#eee8e1" />
          <path d={ICE} fill="#f4f0ec" />
          <path d={RIDGES} fill="#b9bd98" opacity="0.28" />
        </g>
      </g>
      <path d={WATER} fill="#8bcdee" />
      <path d={BORDERS} fill="none" stroke="#8b8a97" strokeWidth="1.7" strokeLinejoin="round" />
      <path d={DISPUTED} fill="none" stroke="#9b9aa4" strokeWidth="1.6" strokeDasharray="3 2.5" />
    </g>
  );
}

function Labels() {
  return (
    <g id="labels">
      {CITIES.map(([name, x0, x1, y, cx, cy, capital]) => (
        <g key={name}>
          <circle cx={cx} cy={cy} r={capital ? 8 : 7} fill="rgba(255,255,255,0.8)" />
          <circle cx={cx} cy={cy} r={capital ? 5.8 : 4.7} fill={capital ? "#fff" : "#000"} stroke={capital ? "#000" : "none"} strokeWidth="1.9" />
          {capital && <circle cx={cx} cy={cy} r="2.8" fill="#000" />}
          <City x={x0 - 1.5} y={y} textLength={x1 - x0 + 2.5} lengthAdjust="spacingAndGlyphs">{name}</City>
        </g>
      ))}
      {COUNTRIES.map(([name, x0, x1, y]) => (
        <Country key={name} x={x0 - 1.5} y={y} textLength={x1 - x0 + 2.5} lengthAdjust="spacingAndGlyphs">{name}</Country>
      ))}
    </g>
  );
}

function WorldMap() {
  return (
    <MapSvg viewBox="84 1218 3296 632" role="img" aria-label="World map">
      <defs>
        <clipPath id="land"><path d={LAND} /></clipPath>
        <filter id="soft" x="-5%" y="-5%" width="110%" height="110%" colorInterpolationFilters="sRGB"><feGaussianBlur stdDeviation="7" /></filter>
        <filter id="faint" x="-5%" y="-5%" width="110%" height="110%" colorInterpolationFilters="sRGB"><feGaussianBlur stdDeviation="1.4" /></filter>
      </defs>
      <Terrain />
      <use href="#terrain" x={-WORLD} />
      {OCEANS.map(([name, x, y, tracking]) => (
        <Ocean key={name + x} x={x} y={y} letterSpacing={tracking}>{name}</Ocean>
      ))}
      <Labels />
      <use href="#labels" x={-WORLD} />
    </MapSvg>
  );
}

function TextArea({ placeholder }) {
  return (
    <AreaWrap>
      <Area placeholder={placeholder} />
      <Grip viewBox="0 0 16 16">
        <path d="M1 15L15 1M9 15L15 9" stroke="#666" strokeWidth="1.4" fill="none" />
      </Grip>
    </AreaWrap>
  );
}

export default function App() {
  return (
    <>
      <GlobalStyle />
      <Page>
        <Title>Disaster Coordination</Title>
        <Section>
          <Heading>Create Disaster</Heading>
          <Form>
            <Input placeholder="Title" />
            <Input placeholder="Location Name (e.g. Manhattan, NYC)" />
            <TextArea placeholder="Description" />
            <Input placeholder="Tags (comma-separated)" />
            <Button type="button" $width={257}>Create Disaster</Button>
          </Form>
        </Section>
        <Section $gap={40}>
          <Heading>Submit Report</Heading>
          <Form>
            <Input placeholder="Disaster ID" />
            <Input placeholder="User ID (e.g. citizen1)" />
            <TextArea placeholder="Report content" />
            <Input placeholder="Image URL (public)" />
            <Button type="button" $width={242}>Submit Report</Button>
          </Form>
        </Section>
        <Section>
          <Heading>Map View</Heading>
          <MapFrame>
            <WorldMap />
          </MapFrame>
        </Section>
        <Shade />
      </Page>
    </>
  );
}
